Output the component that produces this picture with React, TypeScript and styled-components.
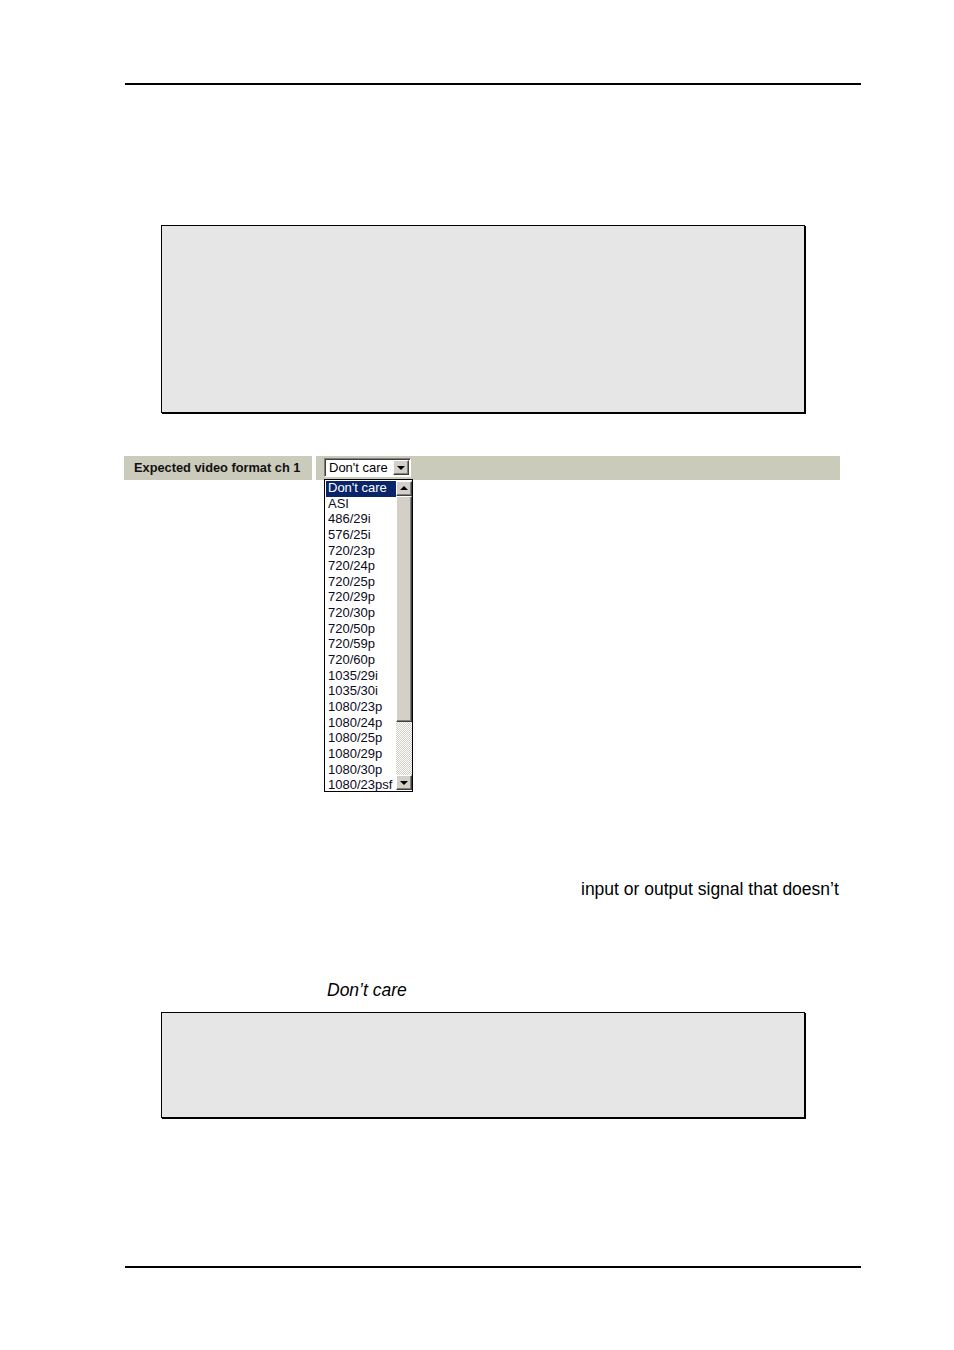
import styled, { createGlobalStyle } from "styled-components";

const GlobalStyle = createGlobalStyle`
    html, body {
        margin: 0;
        padding: 0;
        background: #ffffff;
    }
    body {
        font-family: "Liberation Sans", Arial, sans-serif;
        color: #000;
    }
`;

const Page = styled.div`
    width: 954px;
    height: 1350px;
    overflow: hidden;
    display: flex;
    flex-direction: column;
`;

const Rule = styled.div<{ $top: number }>`
    margin-top: ${(p) => p.$top}px;
    margin-left: 125px;
    width: 736px;
    height: 2px;
    background: #000;
    flex-shrink: 0;
`;

const NoteBox = styled.div<{ $top: number; $height: number }>`
    margin-top: ${(p) => p.$top}px;
    margin-left: 161px;
    width: 644px;
    height: ${(p) => p.$height}px;
    box-sizing: border-box;
    background: #e6e6e6;
    border: 1px solid #000;
    box-shadow: 1px 1px 0 #000;
    flex-shrink: 0;
`;

const FormRow = styled.div`
    margin-top: 43px;
    margin-left: 124px;
    width: 716px;
    height: 24px;
    display: flex;
    gap: 4px;
    flex-shrink: 0;
`;

const LabelCell = styled.div`
    width: 188px;
    box-sizing: border-box;
    background: #cbcbbb;
    padding: 0 0 2px 10px;
    display: flex;
    align-items: center;
    font-size: 12.8px;
    font-weight: bold;
    color: #111;
    white-space: nowrap;
`;

const FieldCell = styled.div`
    flex: 1;
    background: #cbcbbb;
    padding: 2px 0 0 8px;
    position: relative;
`;

const SelectBox = styled.div`
    width: 87px;
    height: 19px;
    box-sizing: border-box;
    background: #fff;
    border-top: 1px solid #808080;
    border-left: 1px solid #808080;
    border-right: 1px solid #fff;
    border-bottom: 1px solid #fff;
    box-shadow: inset 1px 1px 0 #404040;
    display: flex;
    align-items: center;
    padding-left: 4px;
    font-size: 13px;
    position: relative;
`;

const ScrollButton = styled.div<{ $down?: boolean }>`
    width: 16px;
    height: 15px;
    box-sizing: border-box;
    background: #d4d0c8;
    border-top: 1px solid #fff;
    border-left: 1px solid #fff;
    border-right: 1px solid #404040;
    border-bottom: 1px solid #404040;
    box-shadow: inset -1px -1px 0 #808080;
    display: flex;
    align-items: center;
    justify-content: center;
    flex-shrink: 0;

    &::after {
        content: "";
        width: 0;
        height: 0;
        border-left: 4px solid transparent;
        border-right: 4px solid transparent;
        ${(p) =>
            p.$down
                ? "border-top: 4px solid #000; margin-top: 1px;"
                : "border-bottom: 4px solid #000; margin-bottom: 1px;"}
    }
`;

const SelectButton = styled(ScrollButton)`
    position: absolute;
    right: 1px;
    top: 1px;
`;

const ListBox = styled.div`
    position: absolute;
    left: 8px;
    top: 23px;
    width: 89px;
    height: 313px;
    box-sizing: border-box;
    background: #fff;
    border: 1px solid #000;
    display: flex;
    z-index: 2;
`;

const Options = styled.ul`
    list-style: none;
    margin: 0;
    padding: 1px 0 0 1px;
    flex: 1;
`;

const Option = styled.li<{ $selected?: boolean }>`
    height: 15.65px;
    line-height: 14.4px;
    font-size: 13px;
    padding-left: 2px;
    white-space: nowrap;
    color: ${(p) => (p.$selected ? "#fff" : "#0a0a20")};
    background: ${(p) => (p.$selected ? "#0a246a" : "transparent")};
`;

const ScrollBar = styled.div`
    width: 16px;
    display: flex;
    flex-direction: column;
    padding: 1px 0;
`;

const Thumb = styled.div`
    height: 226px;
    box-sizing: border-box;
    background: #d4d0c8;
    border-top: 1px solid #fff;
    border-left: 1px solid #fff;
    border-right: 1px solid #404040;
    border-bottom: 1px solid #404040;
    box-shadow: inset -1px -1px 0 #808080;
`;

const Track = styled.div`
    flex: 1;
    background-color: #fff;
    background-image: repeating-conic-gradient(#d4d0c8 0 25%, #ffffff 0 50%);
    background-size: 2px 2px;
`;

const TextLine = styled.p<{ $top: number; $left: number; $italic?: boolean }>`
    margin: ${(p) => p.$top}px 0 0 ${(p) => p.$left}px;
    height: 18px;
    line-height: 18px;
    font-size: 17.5px;
    font-style: ${(p) => (p.$italic ? "italic" : "normal")};
    white-space: nowrap;
    flex-shrink: 0;
`;

const formats = [
    "Don't care",
    "ASI",
    "486/29i",
    "576/25i",
    "720/23p",
    "720/24p",
    "720/25p",
    "720/29p",
    "720/30p",
    "720/50p",
    "720/59p",
    "720/60p",
    "1035/29i",
    "1035/30i",
    "1080/23p",
    "1080/24p",
    "1080/25p",
    "1080/29p",
    "1080/30p",
    "1080/23psf",
];

export default function App() {
    return (
        <Page>
            <GlobalStyle />
            <Rule $top={83} />
            <NoteBox $top={140} $height={188} />

            <FormRow>
                <LabelCell>Expected video format ch 1</LabelCell>
                <FieldCell>
                    <SelectBox>
                        Don't care
                        <SelectButton $down />
                    </SelectBox>
                    <ListBox>
                        <Options>
                            {formats.map((f, i) => (
                                <Option key={f} $selected={i === 0}>
                                    {f}
                                </Option>
                            ))}
                        </Options>
                        <ScrollBar>
                            <ScrollButton />
                            <Thumb />
                            <Track />
                            <ScrollButton $down />
                        </ScrollBar>
                    </ListBox>
                </FieldCell>
            </FormRow>

            <TextLine $top={400} $left={581}>
                input or output signal that doesn’t
            </TextLine>
            <TextLine $top={83} $left={327} $italic>
                Don’t care
            </TextLine>

            <NoteBox $top={13} $height={106} />
            <Rule $top={148} />
        </Page>
    );
}
